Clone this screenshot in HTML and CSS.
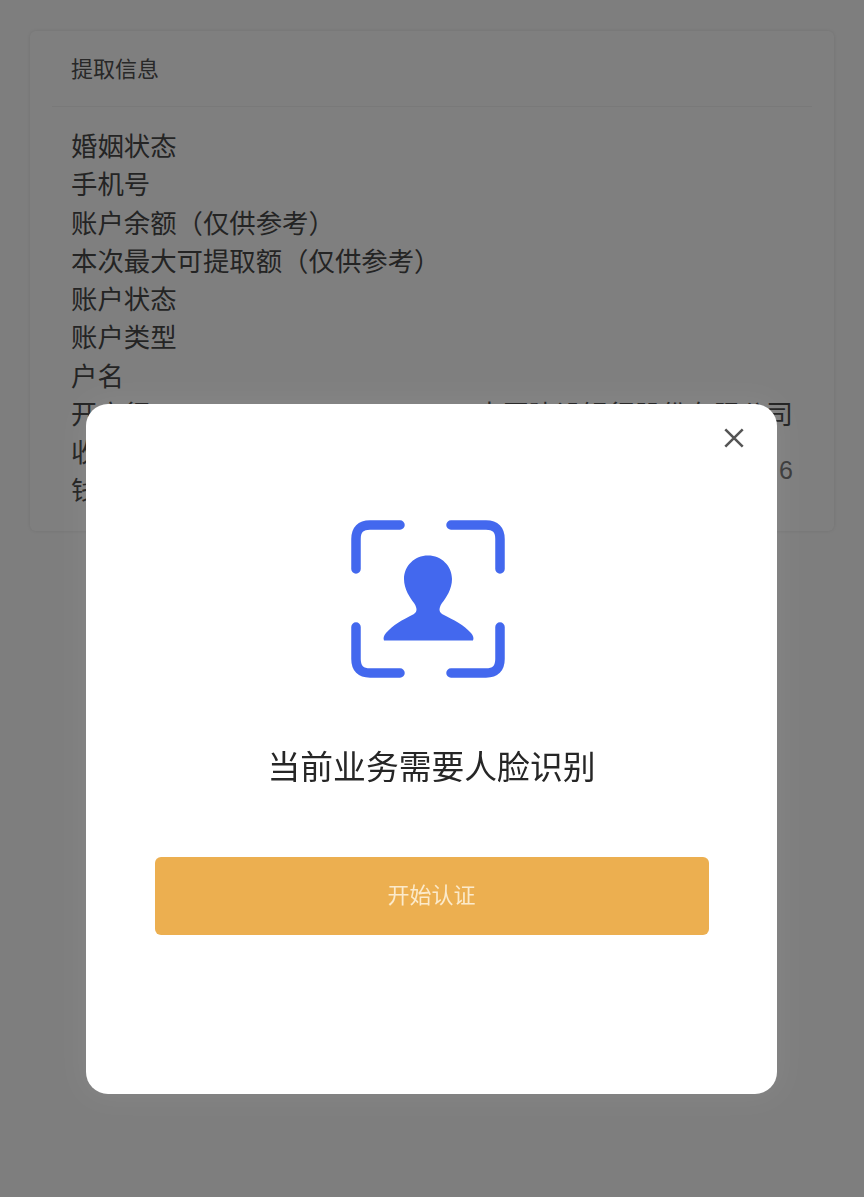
FILE: index.html
```html
<!DOCTYPE html>
<html lang="zh-CN">
<head>
<meta charset="utf-8">
<title>提取信息</title>
<link rel="stylesheet" href="styles.css">
</head>
<body>
<main class="page">
  <section class="card">
    <h2 class="card-title">提取信息</h2>
    <dl class="rows">
      <div class="row"><dt>婚姻状态</dt><dd></dd></div>
      <div class="row"><dt>手机号</dt><dd></dd></div>
      <div class="row"><dt>账户余额（仅供参考）</dt><dd></dd></div>
      <div class="row"><dt>本次最大可提取额（仅供参考）</dt><dd></dd></div>
      <div class="row"><dt>账户状态</dt><dd></dd></div>
      <div class="row"><dt>账户类型</dt><dd></dd></div>
      <div class="row"><dt>户名</dt><dd></dd></div>
      <div class="row"><dt>开户行</dt><dd>中国建设银行股份有限公司</dd></div>
      <div class="row row-wrap"><dt>收款账户<br>钱包</dt><dd class="num">6</dd></div>
    </dl>
  </section>
</main>
<div class="overlay">
  <div class="modal">
    <svg class="close" viewBox="0 0 24 24" aria-hidden="true"><path d="M2.5 2.5 21.5 21.5M21.5 2.5 2.5 21.5"/></svg>
    <svg class="face" viewBox="0 0 154 158" aria-hidden="true">
      <g class="face-frame">
        <path d="M5 49V19Q5 5 19 5H49"/>
        <path d="M100 5H135Q149 5 149 19V49"/>
        <path d="M5 107V139Q5 153 19 153H49"/>
        <path d="M100 153H135Q149 153 149 139V107"/>
      </g>
      <path class="face-person" d="M77 35.5C90.5 35.5 101 46 101 59C101 69 95 78 91 83C89 86 88.5 88 88.5 90Q88.5 92.500 91 94C103 100 113 105 120 113Q123.500 117 122 120.500H33Q31.500 117 35 113C42 105 51 100 63 94Q65.500 92.500 65.500 90C65.500 88 65 86 63 83C59 78 53 69 53 59C53 46 63.500 35.500 77 35.500Z"/>
    </svg>
    <h1 class="modal-title">当前业务需要人脸识别</h1>
    <button class="start" type="button"><span class="start-label">开始认证</span></button>
  </div>
</div>
</body>
</html>
```
FILE: styles.css
```css
* { box-sizing: border-box; }
html, body { margin: 0; height: 100%; }
body {
  background: #fdfdfd;
  font-family: "Noto Sans CJK SC", "Noto Sans", sans-serif;
  color: #484848;
  overflow: hidden;
}
.page { padding: 31px 30px 0; }
.card {
  height: 500px;
  background: #ffffff;
  border-radius: 6px;
  box-shadow: 0 0 4px rgba(0, 0, 0, .1);
  padding: 0 22px;
}
.card-title {
  margin: 0;
  height: 76px;
  padding: 0 19px 3px;
  display: flex;
  align-items: center;
  font-size: 22px;
  font-weight: 400;
  color: #505050;
  border-bottom: 1px solid #f2f2f2;
}
.rows { margin: 19px 0 0; padding: 0 19px; }
.row {
  display: flex;
  justify-content: space-between;
  align-items: center;
  height: 38.3px;
  font-size: 26.4px;
  line-height: 38.3px;
}
.row dt, .row dd { margin: 0; white-space: nowrap; }
.row-wrap { height: 76px; }
.num { color: #777; font-family: "Liberation Sans", sans-serif; font-size: 25px; }
.overlay {
  position: fixed;
  inset: 0;
  background: rgba(0, 0, 0, .5);
}
.modal {
  position: absolute;
  left: 86px;
  top: 404px;
  width: 691px;
  height: 690px;
  background: #fff;
  border-radius: 22px;
  box-shadow: 0 0 28px rgba(255, 255, 255, .07);
  display: flex;
  flex-direction: column;
  align-items: center;
  padding-top: 116px;
}
.close {
  position: absolute;
  top: 23px;
  right: 32px;
  width: 22px;
  height: 22px;
  fill: none;
  stroke: #555;
  stroke-width: 2.8;
}
.face { width: 154px; height: 158px; margin-left: -7px; }
.face-frame path {
  fill: none;
  stroke: #4368ee;
  stroke-width: 9.5;
  stroke-linecap: round;
}
.face-person { fill: #4368ee; }
.modal-title {
  margin: 58px 0 0;
  font-size: 32.8px;
  line-height: 58px;
  font-weight: 400;
  color: #262626;
}
.start {
  margin-top: 63px;
  width: 554px;
  height: 78px;
  border: 0;
  border-radius: 6px;
  background: #ecaf50;
  color: #fbeacb;
  font: inherit;
  font-size: 22px;
  padding: 0 0 6px;
}
```
